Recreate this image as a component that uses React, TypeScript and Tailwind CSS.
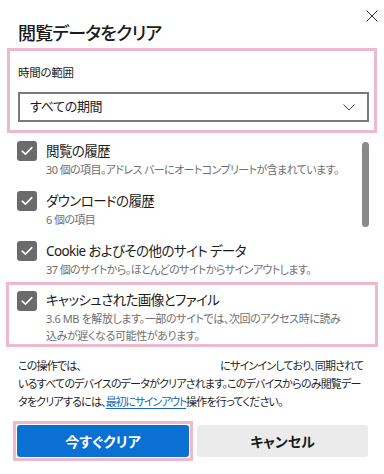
import React from "react";

function Check() {
  return (
    <div className="w-[20px] h-[20px] rounded-[3px] bg-[#6b6b6b] flex items-center justify-center shrink-0">
      <svg width="12" height="10" viewBox="0 0 12 10" fill="none">
        <path d="M1.2 5.2 L4.4 8.2 L10.8 1.6" stroke="white" strokeWidth="1.6" strokeLinecap="round" strokeLinejoin="round" />
      </svg>
    </div>
  );
}

function Item({ title, sub }: { title: string; sub: React.ReactNode }) {
  return (
    <div className="flex gap-[9px]">
      <Check />
      <div className="flex flex-col">
        <div className="text-[13.5px] leading-[20px] tracking-[-0.6px] text-[#1b1b1b] whitespace-nowrap">{title}</div>
        <div className="text-[11px] leading-[18px] tracking-[-0.6px] text-[#707070] whitespace-nowrap">{sub}</div>
      </div>
    </div>
  );
}

export default function App() {
  return (
    <div
      className="w-[384px] h-[474px] bg-white overflow-hidden relative [font-feature-settings:'palt']"
      style={{ fontFamily: "'Noto Sans', 'Noto Sans CJK JP', sans-serif" }}
    >
      {/* header */}
      <div className="flex justify-between items-start pl-[18px] pr-[6px]">
        <h1 className="pt-[20px] text-[18px] leading-[26px] text-[#1b1b1b] font-medium tracking-[-0.8px]">
          閲覧データをクリア
        </h1>
        <svg className="mt-[10px]" width="12" height="12" viewBox="0 0 12 12" fill="none">
          <path d="M0.5 0.5 L11.5 11.5 M11.5 0.5 L0.5 11.5" stroke="#333" strokeWidth="1" />
        </svg>
      </div>

      {/* time range */}
      <div className="mx-[7px] mt-[2px] border-[3px] border-[#efb8cf] pl-[8px] pr-[5px] pt-[14px] pb-[8px]">
        <div className="text-[11.5px] leading-[16px] tracking-[-0.3px] text-[#1b1b1b]">時間の範囲</div>
        <div className="mt-[11px] h-[30px] border-2 border-[#7a7a7a] flex items-center justify-between pl-[10px] pr-[12px]">
          <span className="text-[13px] tracking-[-0.3px] text-[#1b1b1b]">すべての期間</span>
          <svg width="12" height="7" viewBox="0 0 12 7" fill="none">
            <path d="M0.5 0.5 L6 6 L11.5 0.5" stroke="#444" strokeWidth="1" />
          </svg>
        </div>
      </div>

      {/* list */}
      <div className="relative">
        <div className="flex flex-col gap-[12px] pt-[8px] pl-[17px]">
          <Item title="閲覧の履歴" sub="30 個の項目。アドレス バーにオートコンプリートが含まれています。" />
          <Item title="ダウンロードの履歴" sub="6 個の項目" />
          <Item title="Cookie およびその他のサイト データ" sub="37 個のサイトから。ほとんどのサイトからサインアウトします。" />
        </div>
        <div className="mx-[6px] mt-[3px] border-[3px] border-[#efb8cf] pl-[8px] pt-[5px] flex gap-[9px]">
          <div className="mt-[1px]">
            <Check />
          </div>
          <div className="flex flex-col">
            <div className="text-[13.5px] leading-[20px] tracking-[-0.6px] text-[#1b1b1b] whitespace-nowrap">
              キャッシュされた画像とファイル
            </div>
            <div className="text-[11px] leading-[17px] tracking-[-0.4px] text-[#707070] whitespace-nowrap">
              3.6 MB を解放します。一部のサイトでは、次回のアクセス時に読み
              <br />
              込みが遅くなる可能性があります。
            </div>
          </div>
        </div>
        <div className="absolute left-[362px] top-[9px] w-[7px] h-[85px] rounded-full bg-[#8a8a8a]" />
      </div>

      {/* footer text */}
      <div className="mt-[10px] pl-[18px] text-[11px] leading-[18px] tracking-[-0.8px] text-[#1f1f1f] whitespace-nowrap">
        この操作では、<span className="inline-block w-[139px]" />にサインインしており、同期されて
        <br />
        いるすべてのデバイスのデータがクリアされます。このデバイスからのみ閲覧デー
        <br />
        タをクリアするには、
        <span className="text-[#1a67c4] underline underline-offset-2 tracking-[-1.2px]">最初にサインアウト</span>
        操作を行ってください。
      </div>

      {/* buttons */}
      <div className="mt-[10px] pl-[13px] pr-[16px] flex items-center gap-[4px]">
        <div className="border-[3px] border-[#efb8cf] p-[1px]">
          <button className="w-[172px] h-[32px] bg-[#0a70d2] text-white text-[14px] font-bold rounded-[3px]">
            今すぐクリア
          </button>
        </div>
        <button className="w-[171px] h-[32px] bg-[#ebebeb] text-[#1b1b1b] text-[14px] font-semibold rounded-[3px]">
          キャンセル
        </button>
      </div>
    </div>
  );
}
